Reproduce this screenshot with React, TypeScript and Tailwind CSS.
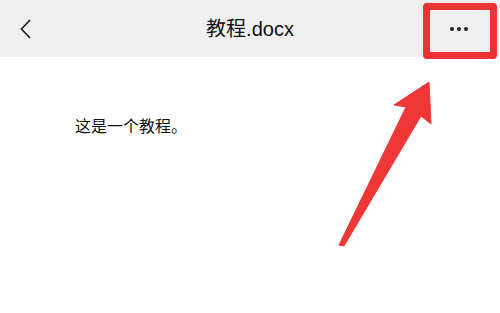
export default function App() {
  return (
    <div
      className="relative w-[500px] h-[313px] bg-white overflow-hidden"
      style={{ fontFamily: '"Liberation Sans", "Noto Sans CJK SC", sans-serif' }}
    >
      {/* Top bar */}
      <header className="flex items-center h-[57px] bg-[#efefef]">
        <div className="w-[76px] pl-[20px] flex items-center">
          <svg width="11" height="20" viewBox="0 0 11 20" fill="none">
            <path d="M10 1 L1.5 10 L10 19" stroke="#1a1a1a" strokeWidth="1.6" />
          </svg>
        </div>
        <h1 className="flex-1 text-center text-[20px] leading-[24px] text-[#111]">教程.docx</h1>
        <div className="w-[76px] h-[57px] flex items-center justify-center pr-[6px]">
          <div className="flex gap-[3px]">
            <span className="w-[4px] h-[4px] rounded-full bg-[#222]" />
            <span className="w-[4px] h-[4px] rounded-full bg-[#222]" />
            <span className="w-[4px] h-[4px] rounded-full bg-[#222]" />
          </div>
        </div>
      </header>

      {/* Document body */}
      <main className="pt-[60px] pl-[75px]">
        <p className="text-[16px] leading-[20px] text-[#111]">这是一个教程。</p>
      </main>

      {/* Annotation: highlight box */}
      <div className="absolute left-[423px] top-[3px] w-[74px] h-[56px] border-[7px] border-[#ec3434] rounded-[4px]" />

      {/* Annotation: arrow */}
      <svg className="absolute left-0 top-0" width="500" height="313" viewBox="0 0 500 313">
        <polygon
          points="429,82 431,124 421,116 344,246 339,245 406,107 394,105"
          fill="#ef3737"
          strokeLinejoin="round"
          stroke="#ef3737"
          strokeWidth="1"
        />
      </svg>
    </div>
  );
}
